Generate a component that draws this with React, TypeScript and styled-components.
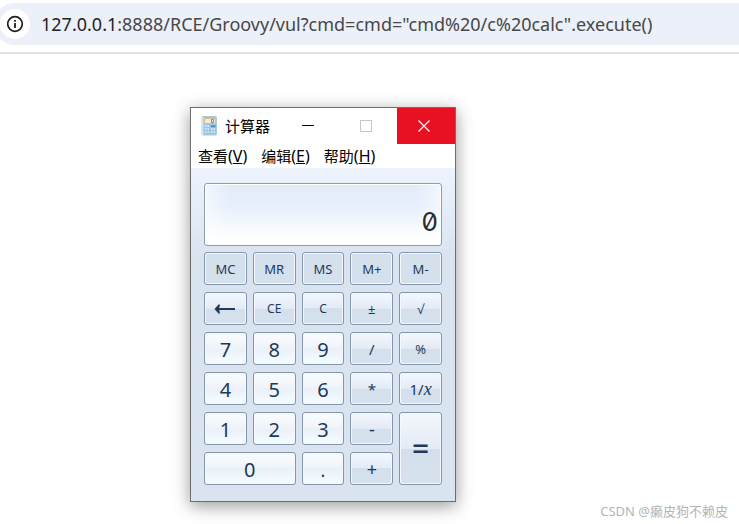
import React from "react";
import styled, { createGlobalStyle, css } from "styled-components";

const UI_FONT = `"Noto Sans", "Open Sans", "Noto Sans CJK SC", sans-serif`;

const GlobalStyle = createGlobalStyle`
  *, *::before, *::after { box-sizing: border-box; }
  body { margin: 0; background: #fff; font-family: ${UI_FONT}; }
`;

const Page = styled.div`
  display: flex;
  flex-direction: column;
  min-height: 100vh;
  overflow: hidden;
`;

const Toolbar = styled.header`
  padding: 3px 0 7px;
  border-bottom: 2px solid #e1e1e1;
`;

const AddressBar = styled.div`
  display: flex;
  align-items: center;
  gap: 11px;
  height: 42px;
  margin-left: -6px;
  padding-left: 6px;
  border-radius: 21px 0 0 21px;
  background: #ecf0f9;
`;

const InfoButton = styled.button`
  display: flex;
  align-items: center;
  justify-content: center;
  flex: none;
  width: 30px;
  height: 30px;
  padding: 0;
  border: 0;
  border-radius: 50%;
  background: #fff;
`;

const Url = styled.a`
  flex: 1;
  color: #474747;
  font-size: 18px;
  line-height: 28px;
  white-space: nowrap;
  text-decoration: none;
`;

const Host = styled.span`
  color: #1f1f1f;
`;

const Content = styled.main`
  display: flex;
  flex: 1;
  flex-direction: column;
  padding: 53px 11px 0 190px;
`;

const Window = styled.section`
  width: 266px;
  border: 1px solid #6b6e74;
  background: #fff;
  box-shadow: 0 4px 16px rgba(0, 0, 0, 0.4);
`;

const TitleBar = styled.div`
  display: flex;
  align-items: center;
  height: 36px;
  padding-left: 10px;
`;

const Title = styled.h1`
  flex: 1;
  margin: 0 0 0 7px;
  color: #000;
  font-size: 15px;
  font-weight: 400;
  line-height: 20px;
  white-space: nowrap;
`;

const CaptionButton = styled.button<{ $close?: boolean }>`
  display: flex;
  align-items: center;
  justify-content: center;
  width: 58px;
  height: 36px;
  padding: 0 4px 0 0;
  border: 0;
  background: ${(p) => (p.$close ? "#e81123" : "transparent")};
`;

const MenuBar = styled.nav`
  display: flex;
  gap: 14px;
  height: 24px;
  padding-left: 7px;
`;

const MenuItem = styled.button`
  padding: 0;
  border: 0;
  background: transparent;
  color: #000;
  font-family: ${UI_FONT};
  font-size: 15px;
  line-height: 24px;
  white-space: nowrap;
`;

const Hotkey = styled.span`
  font-size: 16px;
`;

const Body = styled.div`
  padding: 15px 13px 16px;
  background: linear-gradient(#eef4fd, #d9e4f0 90px);
`;

const Display = styled.output`
  display: flex;
  align-items: flex-end;
  justify-content: flex-end;
  height: 63px;
  margin-bottom: 6px;
  padding: 0 3px 7px;
  border: 1px solid #8e9cb2;
  border-radius: 3px;
  background:
    linear-gradient(90deg, rgba(255, 255, 255, 0.6), transparent 24px calc(100% - 24px), rgba(255, 255, 255, 0.6)),
    linear-gradient(#e2ecf9, #e6effb 35%, #fff 90%);
  box-shadow: inset 0 0 0 1px #fff;
  color: #2c2c2c;
  font-family: Inter, sans-serif;
  font-feature-settings: "zero" 1;
  font-size: 26px;
  line-height: 32px;
`;

const Keys = styled.div`
  display: grid;
  grid-template-columns: repeat(5, 1fr);
  grid-auto-rows: 33px;
  gap: 7px 6px;
`;

type Kind = "memory" | "function" | "digit";

const faces = {
  memory: css`
    background: #d5e0ed;
  `,
  function: css`
    background: linear-gradient(#f3f7fd, #e4ebf5 50%, #d3dfec 50%, #d7e2ee);
  `,
  digit: css`
    background: linear-gradient(#fafcff, #eff3f9 50%, #e9f0f8 50%, #f2faff 85%);
  `,
};

const Key = styled.button<{ $kind: Kind; $size: number; $wide?: boolean; $tall?: boolean }>`
  display: flex;
  align-items: center;
  justify-content: center;
  min-width: 0;
  padding: ${(p) => (p.$kind === "digit" ? "2px 0 0" : "0")};
  border: 1px solid #8496ad;
  border-radius: 3px;
  box-shadow: inset 0 0 0 1px #f5f9ff;
  color: #1e395b;
  font-family: ${UI_FONT};
  font-size: ${(p) => p.$size}px;
  font-weight: ${(p) => (p.$tall ? 500 : 400)};
  line-height: 24px;
  ${(p) => faces[p.$kind]}
  ${(p) => p.$wide && css`grid-column: span 2;`}
  ${(p) => p.$tall && css`grid-row: span 2;`}
`;

const Variable = styled.i`
  font-family: "Liberation Serif", serif;
  font-size: 18px;
`;

const Watermark = styled.footer`
  margin-top: auto;
  align-self: flex-end;
  padding-bottom: 4px;
  color: #b4b4b4;
  font-size: 13px;
  line-height: 18px;
`;

const InfoIcon = () => (
  <svg width="18" height="18" viewBox="0 0 18 18" aria-hidden="true">
    <circle cx="9" cy="9" r="7.3" fill="none" stroke="#1f1f1f" strokeWidth="1.7" />
    <path d="M9 8v5M9 5v1.8" stroke="#1f1f1f" strokeWidth="1.8" />
  </svg>
);

const CalculatorIcon = () => (
  <svg width="17" height="20" viewBox="0 0 17 20" aria-hidden="true">
    <rect x="1" y=".5" width="14.500" height="18.5" rx="1" fill="#9cc5e0" stroke="#a9cbe2" />
    <path d="M1.500 1v18" stroke="#d4e7f3" strokeWidth="2" />
    <rect x="3.5" y="2.5" width="11" height="5" fill="#f3ead8" stroke="#d8bc8a" />
    <path d="M10.5 3.5h2v3h-2z" fill="none" stroke="#6a90ba" />
    <path d="M4 10h1.5M6.5 10H8M4 13h1.5M6.5 13H8M4 16h1.5M6.5 16H8" stroke="#e3f1f9" strokeWidth="1.5" />
    <path d="M10 10.2h4.5" stroke="#4b94c9" strokeWidth="2" />
    <path d="M10 13h1.5M12.5 13H14M10 16h1.5M12.5 16H14" stroke="#e3f1f9" strokeWidth="1.5" />
  </svg>
);

const MinimizeIcon = () => (
  <svg width="12" height="12" viewBox="0 0 12 12" aria-hidden="true">
    <path d="M0 5.5h12" stroke="#000" />
  </svg>
);

const MaximizeIcon = () => (
  <svg width="12" height="12" viewBox="0 0 12 12" aria-hidden="true">
    <rect x=".5" y=".5" width="11" height="11" fill="none" stroke="#c6c6c6" />
  </svg>
);

const CloseIcon = () => (
  <svg width="12" height="12" viewBox="0 0 12 12" aria-hidden="true">
    <path d="M.5.5l11 11M11.5.5l-11 11" stroke="#fff" strokeWidth="1.1" />
  </svg>
);

const BackIcon = () => (
  <svg width="22" height="11" viewBox="0 0 22 11" aria-hidden="true">
    <path d="M4 5h17v2H4z" fill="#1e395b" />
    <path d="M.5 6L4.5 1.5H6L5 6l1 4.5H4.5z" fill="#1e395b" />
  </svg>
);

interface KeySpec {
  label: React.ReactNode;
  name?: string;
  kind: Kind;
  size: number;
  wide?: boolean;
  tall?: boolean;
}

const key = (label: React.ReactNode, kind: Kind, size: number, rest: Partial<KeySpec> = {}): KeySpec => ({
  label,
  kind,
  size,
  ...rest,
});

const keys: KeySpec[] = [
  key("MC", "memory", 13),
  key("MR", "memory", 13),
  key("MS", "memory", 13),
  key("M+", "memory", 13),
  key("M-", "memory", 13),
  key(<BackIcon />, "function", 13, { name: "Backspace" }),
  key("CE", "function", 12),
  key("C", "function", 12),
  key("±", "function", 13),
  key("√", "function", 13),
  key("7", "digit", 20),
  key("8", "digit", 20),
  key("9", "digit", 20),
  key("/", "function", 15),
  key("%", "function", 13),
  key("4", "digit", 20),
  key("5", "digit", 20),
  key("6", "digit", 20),
  key("*", "function", 15),
  key(<span>1/<Variable>x</Variable></span>, "function", 15, { name: "Reciprocal" }),
  key("1", "digit", 20),
  key("2", "digit", 20),
  key("3", "digit", 20),
  key("-", "function", 18),
  key("=", "function", 30, { tall: true }),
  key("0", "digit", 20, { wide: true }),
  key(".", "digit", 18),
  key("+", "function", 18),
];

const menus = [
  { text: "查看", hotkey: "V" },
  { text: "编辑", hotkey: "E" },
  { text: "帮助", hotkey: "H" },
];

export default function App() {
  return (
    <Page>
      <GlobalStyle />
      <Toolbar>
        <AddressBar>
          <InfoButton aria-label="Site information"><InfoIcon /></InfoButton>
          <Url href="#">
            <Host>127.0.0.1</Host>:8888/RCE/Groovy/vul?cmd=cmd="cmd%20/c%20calc".execute()
          </Url>
        </AddressBar>
      </Toolbar>
      <Content>
        <Window>
          <TitleBar>
            <CalculatorIcon />
            <Title>计算器</Title>
            <CaptionButton aria-label="Minimize"><MinimizeIcon /></CaptionButton>
            <CaptionButton aria-label="Maximize" disabled><MaximizeIcon /></CaptionButton>
            <CaptionButton aria-label="Close" $close><CloseIcon /></CaptionButton>
          </TitleBar>
          <MenuBar>
            {menus.map((m) => (
              <MenuItem key={m.hotkey}>{m.text}<Hotkey>(<u>{m.hotkey}</u>)</Hotkey></MenuItem>
            ))}
          </MenuBar>
          <Body>
            <Display>0</Display>
            <Keys>
              {keys.map((k, i) => (
                <Key key={i} aria-label={k.name} $kind={k.kind} $size={k.size} $wide={k.wide} $tall={k.tall}>
                  {k.label}
                </Key>
              ))}
            </Keys>
          </Body>
        </Window>
        <Watermark>CSDN @癞皮狗不赖皮</Watermark>
      </Content>
    </Page>
  );
}
